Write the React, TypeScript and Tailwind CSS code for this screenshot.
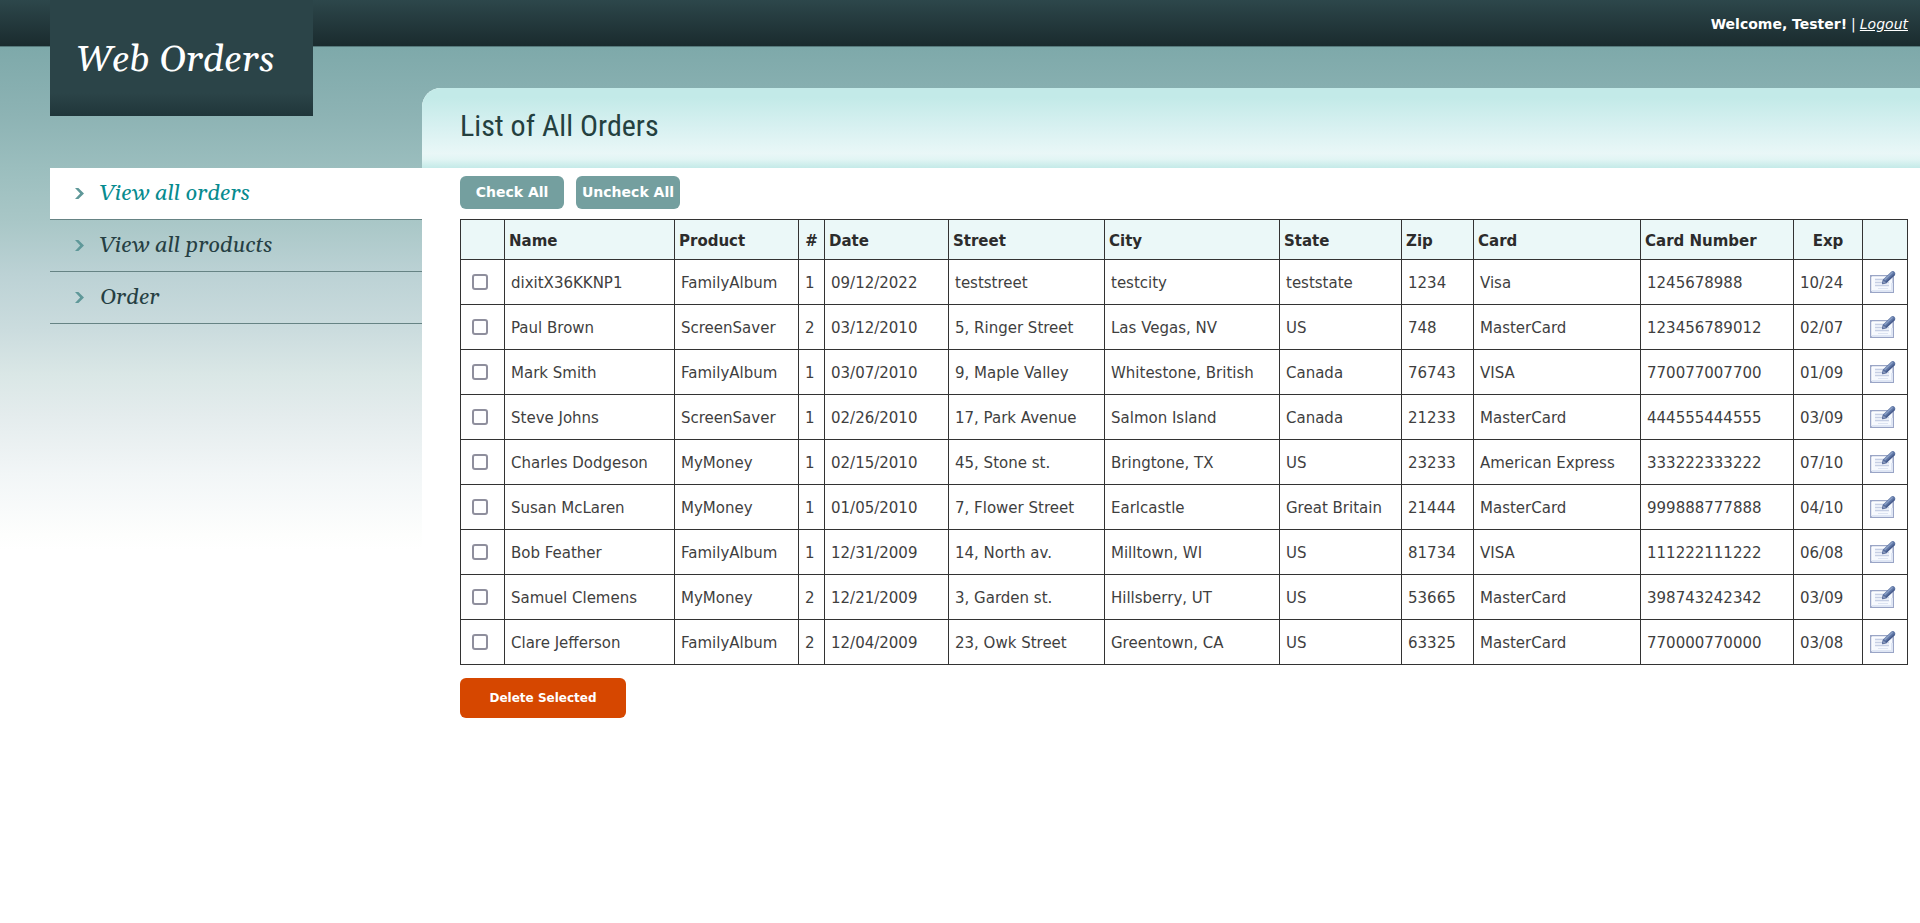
import React from "react";

type Order = {
  name: string;
  product: string;
  quantity: number;
  date: string;
  street: string;
  city: string;
  state: string;
  zip: string;
  card: string;
  cardNumber: string;
  exp: string;
};

const row = (
  name: string, product: string, quantity: number, date: string, street: string, city: string,
  state: string, zip: string, card: string, cardNumber: string, exp: string,
): Order => ({ name, product, quantity, date, street, city, state, zip, card, cardNumber, exp });

const orders: Order[] = [
  row("dixitX36KKNP1", "FamilyAlbum", 1, "09/12/2022", "teststreet", "testcity", "teststate", "1234", "Visa", "1245678988", "10/24"),
  row("Paul Brown", "ScreenSaver", 2, "03/12/2010", "5, Ringer Street", "Las Vegas, NV", "US", "748", "MasterCard", "123456789012", "02/07"),
  row("Mark Smith", "FamilyAlbum", 1, "03/07/2010", "9, Maple Valley", "Whitestone, British", "Canada", "76743", "VISA", "770077007700", "01/09"),
  row("Steve Johns", "ScreenSaver", 1, "02/26/2010", "17, Park Avenue", "Salmon Island", "Canada", "21233", "MasterCard", "444555444555", "03/09"),
  row("Charles Dodgeson", "MyMoney", 1, "02/15/2010", "45, Stone st.", "Bringtone, TX", "US", "23233", "American Express", "333222333222", "07/10"),
  row("Susan McLaren", "MyMoney", 1, "01/05/2010", "7, Flower Street", "Earlcastle", "Great Britain", "21444", "MasterCard", "999888777888", "04/10"),
  row("Bob Feather", "FamilyAlbum", 1, "12/31/2009", "14, North av.", "Milltown, WI", "US", "81734", "VISA", "111222111222", "06/08"),
  row("Samuel Clemens", "MyMoney", 2, "12/21/2009", "3, Garden st.", "Hillsberry, UT", "US", "53665", "MasterCard", "398743242342", "03/09"),
  row("Clare Jefferson", "FamilyAlbum", 2, "12/04/2009", "23, Owk Street", "Greentown, CA", "US", "63325", "MasterCard", "770000770000", "03/08"),
];

const columns: { label: string; width: string; center?: boolean }[] = [
  { label: "", width: "w-[44px]" },
  { label: "Name", width: "w-[170px]" },
  { label: "Product", width: "w-[124px]" },
  { label: "#", width: "w-[26px]", center: true },
  { label: "Date", width: "w-[124px]" },
  { label: "Street", width: "w-[156px]" },
  { label: "City", width: "w-[175px]" },
  { label: "State", width: "w-[122px]" },
  { label: "Zip", width: "w-[72px]" },
  { label: "Card", width: "w-[167px]" },
  { label: "Card Number", width: "w-[153px]" },
  { label: "Exp", width: "w-[69px]", center: true },
  { label: "", width: "w-[45px]" },
];

const menu = ["View all orders", "View all products", "Order"];

function Chevron() {
  return (
    <svg width="9" height="11" viewBox="0 0 9 11" className="shrink-0" aria-hidden="true">
      <path d="M0 0H3.4L9 5.5L3.4 11H0L5.2 5.5Z" fill="#5f9899" />
    </svg>
  );
}

function EditIcon() {
  return (
    <svg width="26" height="22" viewBox="0 0 26 22" aria-hidden="true">
      <rect x="0.75" y="4.75" width="22.5" height="16.5" fill="#f6f9fe" stroke="#9aa5c6" strokeWidth="1.5" />
      <path d="M2 20V6H22" fill="none" stroke="#fff" />
      <path d="M2 20H22V12" fill="none" stroke="#dfe6f4" strokeWidth="2" />
      <path d="M5 8.5H14M5 11.5H19M5 14.5H19" stroke="#c6cfe4" strokeWidth="1.6" />
      <path d="M8 17.5H18" stroke="#dde4f2" />
      <path d="M12.4 12.6L13 8.6L21.4 0.6Q23.2 -0.6 24.8 1.2Q26 3 24.4 4.4L16.4 12Z" fill="#5f77a6" />
      <path d="M14.6 8.8L22.6 1.2" stroke="#8b9fc6" strokeWidth="1.4" />
      <path d="M16 11.2L24.6 3.4" stroke="#485c8c" strokeWidth="1.4" />
      <path d="M12.4 12.9L13.2 8.9L16.6 11.8Z" fill="#93a3c4" stroke="#4d6192" strokeWidth="0.8" />
    </svg>
  );
}

export default function App() {
  const [checked, setChecked] = React.useState<boolean[]>(() => orders.map(() => false));
  const toggle = (index: number) => setChecked(checked.map((c, i) => (i === index ? !c : c)));

  return (
    <div className="flex min-h-screen flex-col bg-[linear-gradient(#7ea9aa_47px,#8db3b4_115px,#9bbebe_168px,#a9c7c7_222px,#bcd2d5_275px,#cbdcde_330px,#dae7e6_375px,#e4eced_415px,#f2f6f7_475px,#fdfefd_535px,#ffffff_550px)] font-['DejaVu_Sans',sans-serif] text-[#3f3f3f]">
      <header className="flex h-[47px] items-start justify-between border-b border-[#56797b] bg-linear-to-b from-[#2d474b] to-[#1a2b2e]">
        <div className="z-10 ml-[50px] flex h-[116px] w-[263px] shrink-0 items-center bg-[linear-gradient(#2b4448_80%,#20363a)] pt-1 pl-[26px]">
          <span className="font-['Gelasio','Liberation_Serif',serif] text-[37px] leading-none whitespace-nowrap text-white italic">Web Orders</span>
        </div>
        <div className="flex gap-1 pt-3.5 pr-3 text-sm leading-5 text-white">
          <span className="font-bold">Welcome, Tester!</span>
          <span>|</span>
          <a href="#logout" className="italic underline">Logout</a>
        </div>
      </header>

      <div className="flex grow">
        <nav className="w-[422px] shrink-0 pt-[121px] pl-[50px]" aria-label="Main">
          <ul>
            {menu.map((item, i) => (
              <li key={item} className={i === 0 ? "border-b border-[#668384] bg-white" : "border-b border-[#668384]"}>
                <a
                  href="#menu"
                  className={
                    "flex h-[51px] items-center gap-4 pl-[25px] font-['Gelasio','Liberation_Serif',serif] text-[22px] italic " +
                    (i === 0 ? "text-[#078b8f]" : "text-[#263f43]")
                  }
                >
                  <Chevron />
                  <span className="pt-0.5">{item}</span>
                </a>
              </li>
            ))}
          </ul>
        </nav>

        <main className="mt-[41px] min-w-0 grow rounded-tl-[19px] bg-white">
          <div className="flex h-20 items-center rounded-tl-[19px] bg-[linear-gradient(#c3eae8_12%,#d8f1f1_50%,#e9f7f7_82%,#e2f5f4_89%,#c4eae8)] pb-1 pl-[38px]">
            <h1 className="font-['Roboto_Condensed','Liberation_Sans',sans-serif] text-[30px] leading-none text-[#24403f]">List of All Orders</h1>
          </div>
          <div className="pt-2 pr-3 pl-[38px]">
            <div className="flex gap-3">
              <button type="button" onClick={() => setChecked(orders.map(() => true))} className="h-[33px] w-[104px] rounded-md bg-[#749f9f] pb-0.5 text-sm font-bold whitespace-nowrap text-white">
                Check All
              </button>
              <button type="button" onClick={() => setChecked(orders.map(() => false))} className="h-[33px] w-[104px] rounded-md bg-[#749f9f] pb-0.5 text-sm font-bold whitespace-nowrap text-white">
                Uncheck All
              </button>
            </div>

            <table className="mt-2.5 w-full table-fixed border-collapse text-left text-[15px]">
              <thead>
                <tr className="h-10 bg-[#ebf8f8] text-[#2c2c2c]">
                  {columns.map((c, i) => (
                    <th key={i} scope="col" className={c.width + " border border-[#333] p-0 pt-1 whitespace-nowrap " + (c.center ? "text-center" : "pl-1")}>
                      {c.label}
                    </th>
                  ))}
                </tr>
              </thead>
              <tbody>
                {orders.map((o, i) => (
                  <tr key={o.name} className="h-[45px] bg-white">
                    <td className="border border-[#333] p-0 pl-[11px]">
                      <input
                        type="checkbox"
                        aria-label={"Select " + o.name}
                        checked={checked[i]}
                        onChange={() => toggle(i)}
                        className="block size-4 appearance-none rounded-[3px] border-2 border-[#8f8f9d] bg-white checked:bg-[#749f9f]"
                      />
                    </td>
                    {Object.values(o).map((value, j) => (
                      <td key={j} className="border border-[#333] p-0 pt-0.5 pl-1.5 whitespace-nowrap">{value}</td>
                    ))}
                    <td className="border border-[#333] p-0 pl-[7px]">
                      <button type="button" aria-label={"Edit " + o.name} className="block">
                        <EditIcon />
                      </button>
                    </td>
                  </tr>
                ))}
              </tbody>
            </table>

            <button type="button" className="mt-[13px] h-10 w-[166px] rounded-md bg-[#d64700] text-xs font-bold whitespace-nowrap text-white">
              Delete Selected
            </button>
          </div>
        </main>
      </div>
    </div>
  );
}
